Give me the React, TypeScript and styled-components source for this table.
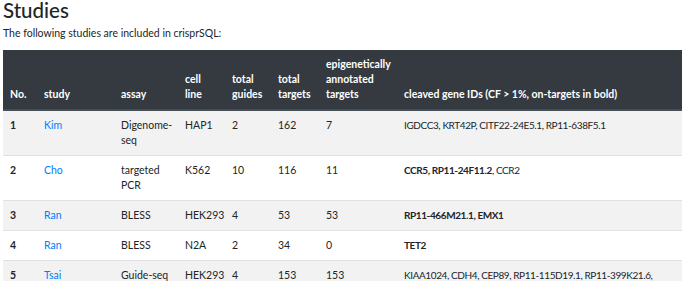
import React from "react";
import styled, { createGlobalStyle } from "styled-components";

const Global = createGlobalStyle`
  html, body { margin: 0; padding: 0; background: #fff; }
  body {
    font-family: Lato, "Open Sans", sans-serif;
    font-size: 10.5px;
    line-height: 15px;
    color: #212529;
  }
`;

const Page = styled.div`
  padding: 0 3px;
`;

const Title = styled.h1`
  margin: 0;
  font-size: 20.5px;
  font-weight: 500;
  line-height: 20px;
`;

const Lead = styled.p`
  margin: 6px 0 9px;
`;

const Table = styled.table`
  width: 679px;
  border-collapse: collapse;
  table-layout: fixed;
`;

const Th = styled.th<{ $w?: number }>`
  box-sizing: border-box;
  background: #343a40;
  color: #fff;
  font-weight: 700;
  text-align: left;
  vertical-align: bottom;
  padding: 7px;
  border-bottom: 2px solid #454d55;
  width: ${(p) => (p.$w ? `${p.$w}px` : "auto")};
`;

const Tr = styled.tr<{ $striped: boolean }>`
  background: ${(p) => (p.$striped ? "#f2f2f2" : "#fff")};
`;

const Td = styled.td<{ $bold?: boolean }>`
  padding: 7px;
  vertical-align: top;
  border-top: 1px solid #dee2e6;
  font-weight: ${(p) => (p.$bold ? 700 : 400)};
`;

const GeneCell = styled(Td)`
  font-size: 10px;
  letter-spacing: -0.4px;
`;

const StudyLink = styled.a`
  color: #007bff;
  text-decoration: none;
`;

const Gene = styled.span<{ $on: boolean }>`
  font-weight: ${(p) => (p.$on ? 700 : 400)};
`;

type Row = {
  no: number;
  study: string;
  assay: string;
  cell: string;
  guides: number;
  targets: number;
  epi: number;
  genes: { id: string; on: boolean }[];
};

const rows: Row[] = [
  {
    no: 1, study: "Kim", assay: "Digenome-seq", cell: "HAP1", guides: 2, targets: 162, epi: 7,
    genes: [
      { id: "IGDCC3", on: false }, { id: "KRT42P", on: false },
      { id: "CITF22-24E5.1", on: false }, { id: "RP11-638F5.1", on: false },
    ],
  },
  {
    no: 2, study: "Cho", assay: "targeted PCR", cell: "K562", guides: 10, targets: 116, epi: 11,
    genes: [{ id: "CCR5", on: true }, { id: "RP11-24F11.2", on: true }, { id: "CCR2", on: false }],
  },
  {
    no: 3, study: "Ran", assay: "BLESS", cell: "HEK293", guides: 4, targets: 53, epi: 53,
    genes: [{ id: "RP11-466M21.1", on: true }, { id: "EMX1", on: true }],
  },
  {
    no: 4, study: "Ran", assay: "BLESS", cell: "N2A", guides: 2, targets: 34, epi: 0,
    genes: [{ id: "TET2", on: true }],
  },
  {
    no: 5, study: "Tsai", assay: "Guide-seq", cell: "HEK293", guides: 4, targets: 153, epi: 153,
    genes: [
      { id: "KIAA1024", on: false }, { id: "CDH4", on: false }, { id: "CEP89", on: false },
      { id: "RP11-115D19.1", on: false }, { id: "RP11-399K21.6,", on: false },
    ],
  },
];

function Genes({ genes }: { genes: Row["genes"] }) {
  return (
    <>
      {genes.map((g, i) => {
        const next = genes[i + 1];
        const sepBold = g.on && next && next.on;
        return (
          <React.Fragment key={g.id}>
            <Gene $on={g.on}>
              {g.id}
              {sepBold ? ", " : ""}
            </Gene>
            {next && !sepBold ? ", " : ""}
          </React.Fragment>
        );
      })}
    </>
  );
}

export default function App() {
  return (
    <Page>
      <Global />
      <Title>Studies</Title>
      <Lead>The following studies are included in crisprSQL:</Lead>
      <Table>
        <thead>
          <tr>
            <Th $w={34}>No.</Th>
            <Th $w={77}>study</Th>
            <Th $w={64}>assay</Th>
            <Th $w={47}>cell line</Th>
            <Th $w={46}>total guides</Th>
            <Th $w={48}>total targets</Th>
            <Th $w={78}>epigenetically annotated targets</Th>
            <Th>cleaved gene IDs (CF &gt; 1%, on-targets in bold)</Th>
          </tr>
        </thead>
        <tbody>
          {rows.map((r, i) => (
            <Tr key={r.no} $striped={i % 2 === 0}>
              <Td $bold>{r.no}</Td>
              <Td><StudyLink href="#">{r.study}</StudyLink></Td>
              <Td>{r.assay}</Td>
              <Td>{r.cell}</Td>
              <Td>{r.guides}</Td>
              <Td>{r.targets}</Td>
              <Td>{r.epi}</Td>
              <GeneCell><Genes genes={r.genes} /></GeneCell>
            </Tr>
          ))}
        </tbody>
      </Table>
    </Page>
  );
}
